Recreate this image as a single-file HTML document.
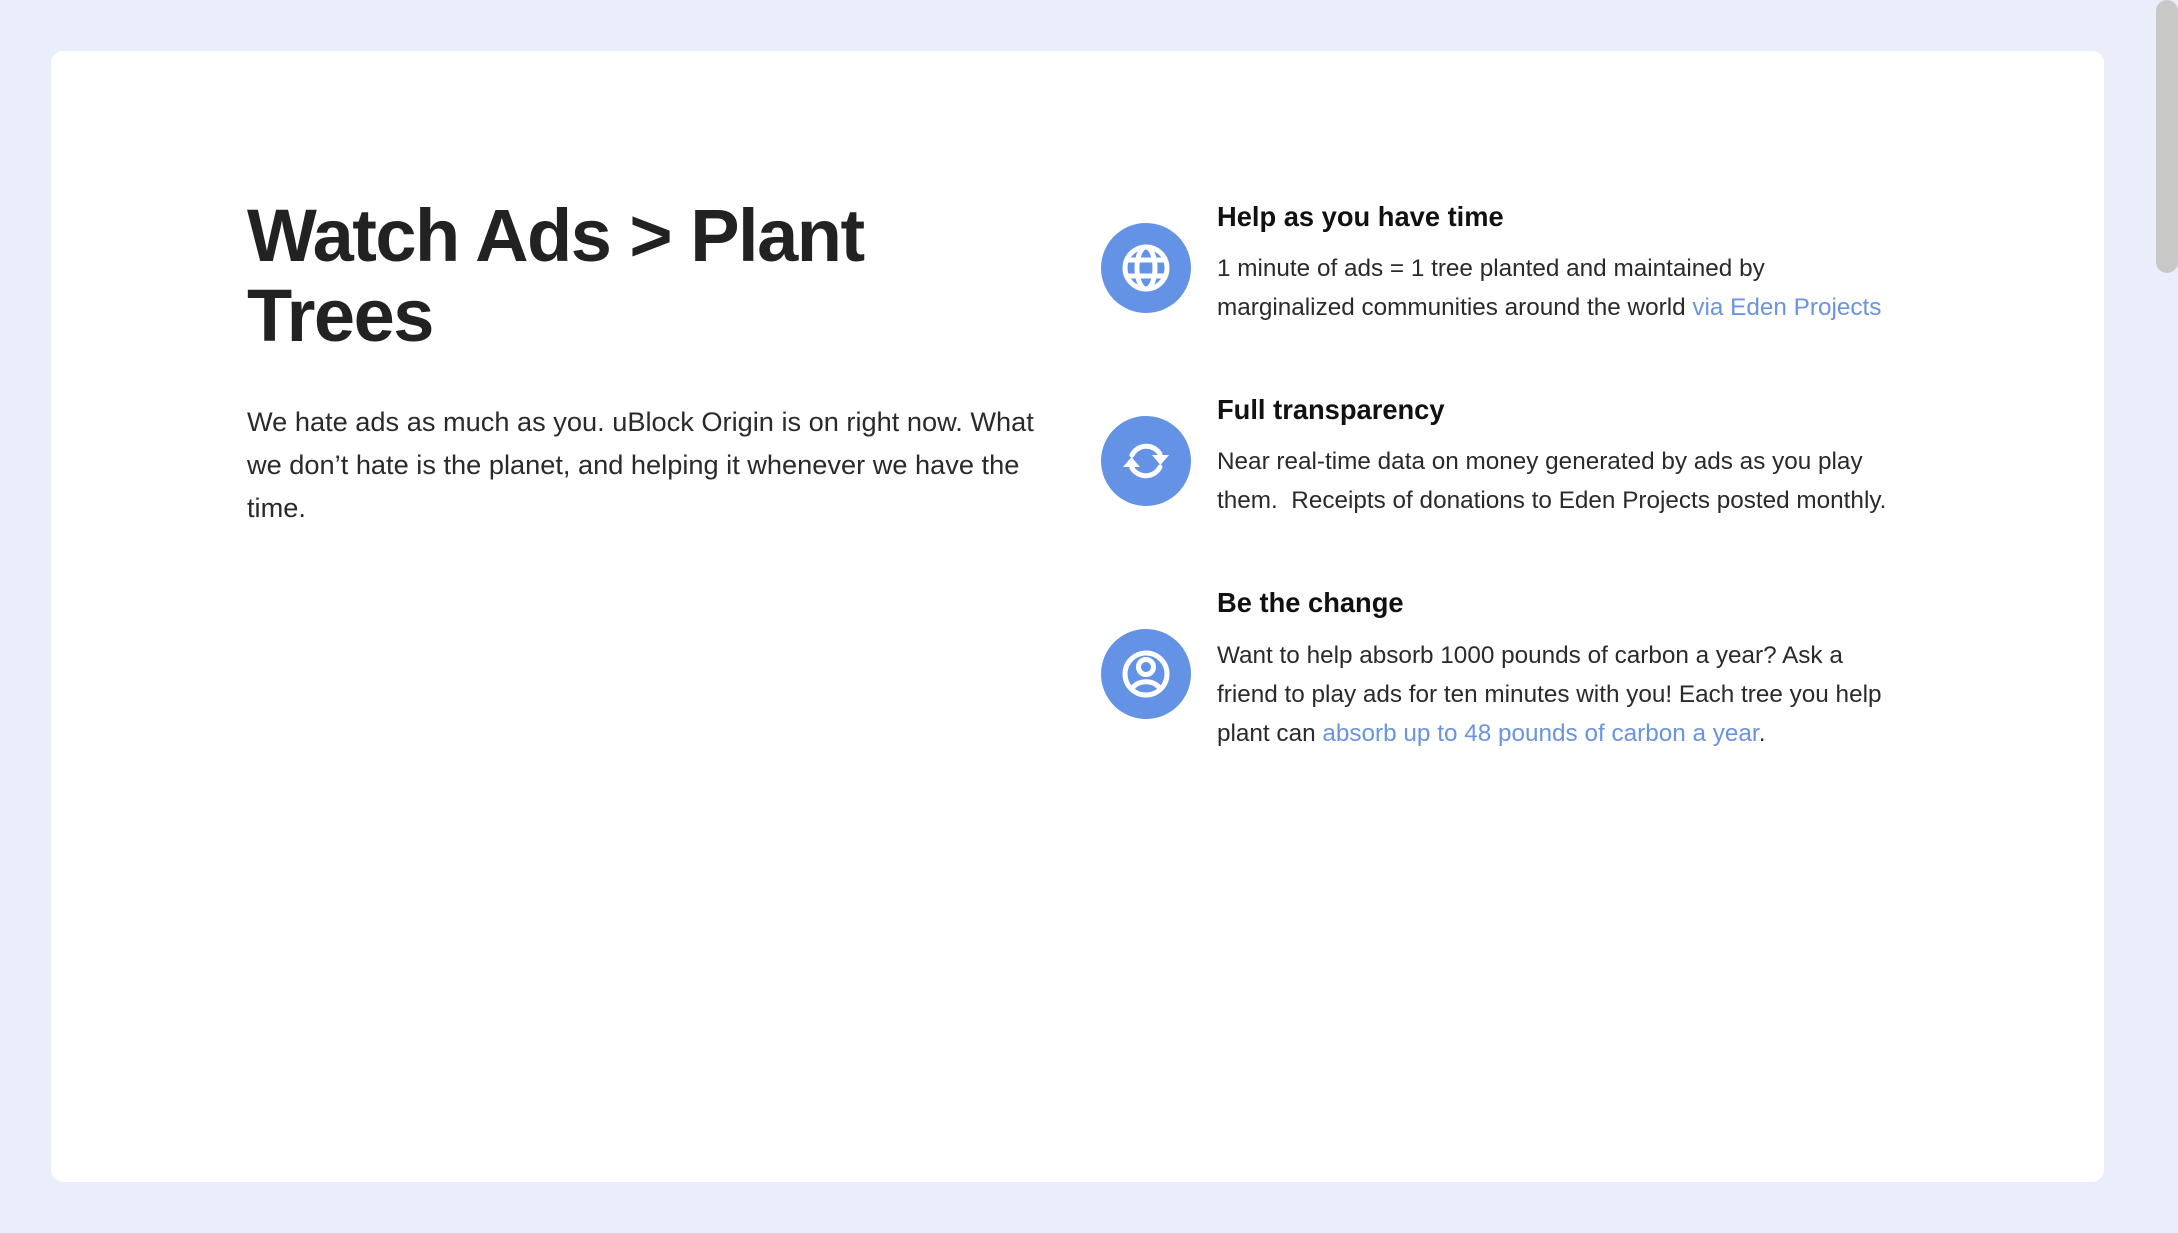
<!DOCTYPE html>
<html><head><meta charset="utf-8"><style>
html,body{margin:0;padding:0;}
body{width:2178px;height:1233px;background:#e9eefa;position:relative;overflow:hidden;font-family:"Liberation Sans",sans-serif;color:#222;}
.card{position:absolute;left:51px;top:51px;width:2053px;height:1131px;background:#fff;border-radius:12px;}
.abs{position:absolute;white-space:nowrap;}
h1{margin:0;position:absolute;left:247px;top:196px;font-size:74px;line-height:80px;font-weight:bold;letter-spacing:-1.5px;color:#222;}
.p{left:247px;top:400px;font-size:27.2px;line-height:43px;color:#2a2a2a;}
.h{left:1217px;font-size:27.3px;line-height:36px;font-weight:bold;color:#111;}
.b{left:1217px;font-size:24.3px;line-height:39px;color:#2a2a2a;}
a{color:#6a93e0;text-decoration:none;}
.ic{position:absolute;left:1101px;width:90px;height:90px;}
.thumb{position:absolute;left:2156px;top:0;width:22px;height:273px;background:#c8c9c6;border-radius:11px;}
</style></head><body>
<div class="card"></div>
<h1>Watch Ads &gt; Plant<br>Trees</h1>
<div class="abs p">We hate ads as much as you. uBlock Origin is on right now. What<br>we don’t hate is the planet, and helping it whenever we have the<br>time.</div>

<svg class="ic" style="top:223px" viewBox="0 0 90 90"><circle cx="45" cy="45" r="45" fill="#6493e6"/><g fill="none" stroke="#fff" stroke-width="5"><circle cx="45" cy="45" r="21"/><ellipse cx="45" cy="45" rx="9" ry="21"/><line x1="26" y1="37" x2="64" y2="37"/><line x1="26" y1="53" x2="64" y2="53"/></g></svg>
<div class="abs h" style="top:199px">Help as you have time</div>
<div class="abs b" style="top:249px">1 minute of ads = 1 tree planted and maintained by<br>marginalized communities around the world <a>via Eden Projects</a></div>

<svg class="ic" style="top:416px" viewBox="0 0 90 90"><circle cx="45" cy="45" r="45" fill="#6493e6"/><g fill="none" stroke="#fff" stroke-width="5" stroke-linecap="round"><path d="M31 39 A16 16 0 0 1 59 38"/><path d="M59 51 A16 16 0 0 1 31 52"/></g><polygon points="51,39 68,39 59.5,49" fill="#fff"/><polygon points="22,51 39,51 30.5,41" fill="#fff"/></svg>
<div class="abs h" style="top:392px">Full transparency</div>
<div class="abs b" style="top:442px">Near real-time data on money generated by ads as you play<br>them.&nbsp; Receipts of donations to Eden Projects posted monthly.</div>

<svg class="ic" style="top:629px" viewBox="0 0 90 90"><circle cx="45" cy="45" r="45" fill="#6493e6"/><defs><clipPath id="c"><circle cx="45" cy="45" r="21"/></clipPath></defs><g fill="none" stroke="#fff" stroke-width="5"><circle cx="45" cy="45" r="21"/><circle cx="45" cy="38" r="7.5"/><path clip-path="url(#c)" d="M30 64 C31 49 59 49 60 64"/></g></svg>
<div class="abs h" style="top:585px">Be the change</div>
<div class="abs b" style="top:636px">Want to help absorb 1000 pounds of carbon a year? Ask a<br>friend to play ads for ten minutes with you! Each tree you help<br>plant can <a>absorb up to 48 pounds of carbon a year</a>.</div>

<div class="thumb"></div>
</body></html>
